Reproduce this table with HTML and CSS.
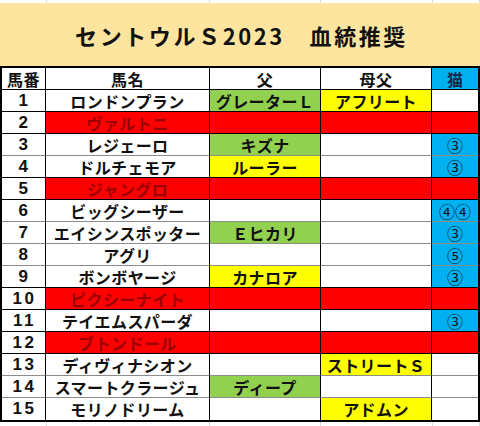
FILE: index.html
```html
<!DOCTYPE html>
<html lang="ja">
<head>
<meta charset="utf-8">
<title>セントウルＳ2023 血統推奨</title>
<link rel="stylesheet" href="styles.css">
</head>
<body>
<div class="sheet">
  <div class="strip strip-top"><span></span><span></span><span></span><span></span><span></span></div>
  <div class="title">セントウルＳ2023　血統推奨</div>
  <div class="table">
    <div class="row head pre">
      <div class="cell">馬番</div><div class="cell">馬名</div><div class="cell">父</div><div class="cell">母父</div><div class="cell blue cat">猫</div>
    </div>
    <div class="row pre">
      <div class="cell num">1</div><div class="cell">ロンドンプラン</div><div class="cell green">グレーターＬ</div><div class="cell yellow">アフリート</div><div class="cell"></div>
    </div>
    <div class="row pre">
      <div class="cell num">2</div><div class="cell red">ヴァルトニ</div><div class="cell red"></div><div class="cell red"></div><div class="cell red"></div>
    </div>
    <div class="row">
      <div class="cell num">3</div><div class="cell">レジェーロ</div><div class="cell green">キズナ</div><div class="cell"></div><div class="cell blue">③</div>
    </div>
    <div class="row pre">
      <div class="cell num">4</div><div class="cell">ドルチェモア</div><div class="cell yellow">ルーラー</div><div class="cell"></div><div class="cell blue">③</div>
    </div>
    <div class="row pre">
      <div class="cell num">5</div><div class="cell red">ジャングロ</div><div class="cell red"></div><div class="cell red"></div><div class="cell red"></div>
    </div>
    <div class="row">
      <div class="cell num">6</div><div class="cell">ビッグシーザー</div><div class="cell"></div><div class="cell"></div><div class="cell blue">④④</div>
    </div>
    <div class="row">
      <div class="cell num">7</div><div class="cell">エイシンスポッター</div><div class="cell green">Ｅヒカリ</div><div class="cell"></div><div class="cell blue">③</div>
    </div>
    <div class="row">
      <div class="cell num">8</div><div class="cell">アグリ</div><div class="cell"></div><div class="cell"></div><div class="cell blue">⑤</div>
    </div>
    <div class="row pre">
      <div class="cell num">9</div><div class="cell">ボンボヤージ</div><div class="cell yellow">カナロア</div><div class="cell"></div><div class="cell blue">③</div>
    </div>
    <div class="row pre">
      <div class="cell num">10</div><div class="cell red">ピクシーナイト</div><div class="cell red"></div><div class="cell red"></div><div class="cell red"></div>
    </div>
    <div class="row pre">
      <div class="cell num">11</div><div class="cell">テイエムスパーダ</div><div class="cell"></div><div class="cell"></div><div class="cell blue">③</div>
    </div>
    <div class="row pre">
      <div class="cell num">12</div><div class="cell red">ブトンドール</div><div class="cell red"></div><div class="cell red"></div><div class="cell red"></div>
    </div>
    <div class="row">
      <div class="cell num">13</div><div class="cell">ディヴィナシオン</div><div class="cell"></div><div class="cell yellow">ストリートＳ</div><div class="cell"></div>
    </div>
    <div class="row">
      <div class="cell num">14</div><div class="cell">スマートクラージュ</div><div class="cell green">ディープ</div><div class="cell"></div><div class="cell"></div>
    </div>
    <div class="row last">
      <div class="cell num">15</div><div class="cell">モリノドリーム</div><div class="cell"></div><div class="cell yellow">アドムン</div><div class="cell"></div>
    </div>
  </div>
  <div class="strip strip-bottom"><span></span><span></span><span></span><span></span><span></span></div>
</div>
</body>
</html>
```

FILE: styles.css
```css
html, body {
  margin: 0;
  padding: 0;
  background: #ffffff;
}

.sheet {
  width: 480px;
  font-family: "Noto Sans CJK JP", "Noto Sans", sans-serif;
  color: #111111;
}

.strip {
  display: grid;
  grid-template-columns: 47px 163px 111px 112px 47px;
}
.strip span {
  border-right: 1px solid #dcdcdc;
}
.strip-top { height: 3px; }
.strip-bottom { height: 4px; }

.title {
  height: 63px;
  background: #fde5a0;
  display: flex;
  align-items: center;
  justify-content: center;
  font-size: 22px;
  font-weight: 700;
  letter-spacing: 2.6px;
  padding-left: 3px;
  box-sizing: border-box;
}

.table {
  width: 480px;
  box-sizing: border-box;
  border: 2px solid #000000;
}

.row {
  display: grid;
  grid-template-columns: 44px 164px 111px 111px 46px;
  height: 22px;
}

.cell {
  box-sizing: border-box;
  border-right: 1px solid #000000;
  border-bottom: 1px solid #8c8c8c;
  display: flex;
  align-items: center;
  justify-content: center;
  font-size: 16px;
  line-height: 16px;
  font-weight: 700;
  letter-spacing: 0.4px;
  white-space: nowrap;
  background: #ffffff;
}
.cell:last-child { border-right: none; }
.row.last .cell { border-bottom: none; }

.row.pre .cell,
.row.head .cell { border-bottom-color: #000000; }

.num {
  font-family: "Liberation Sans", Arial, sans-serif;
  font-size: 17px;
  letter-spacing: 2.5px;
  padding-left: 2px;
}

.green { background: #92d050; }
.yellow { background: #ffff00; }
.red {
  background: #ff0000;
  color: #9a0000;
  border-bottom-color: #000000;
}
.blue {
  background: #00b0f0;
  font-size: 16px;
  font-weight: 400;
  letter-spacing: 0;
}
.blue.cat {
  font-weight: 700;
  color: #0c2a4a;
}
```
